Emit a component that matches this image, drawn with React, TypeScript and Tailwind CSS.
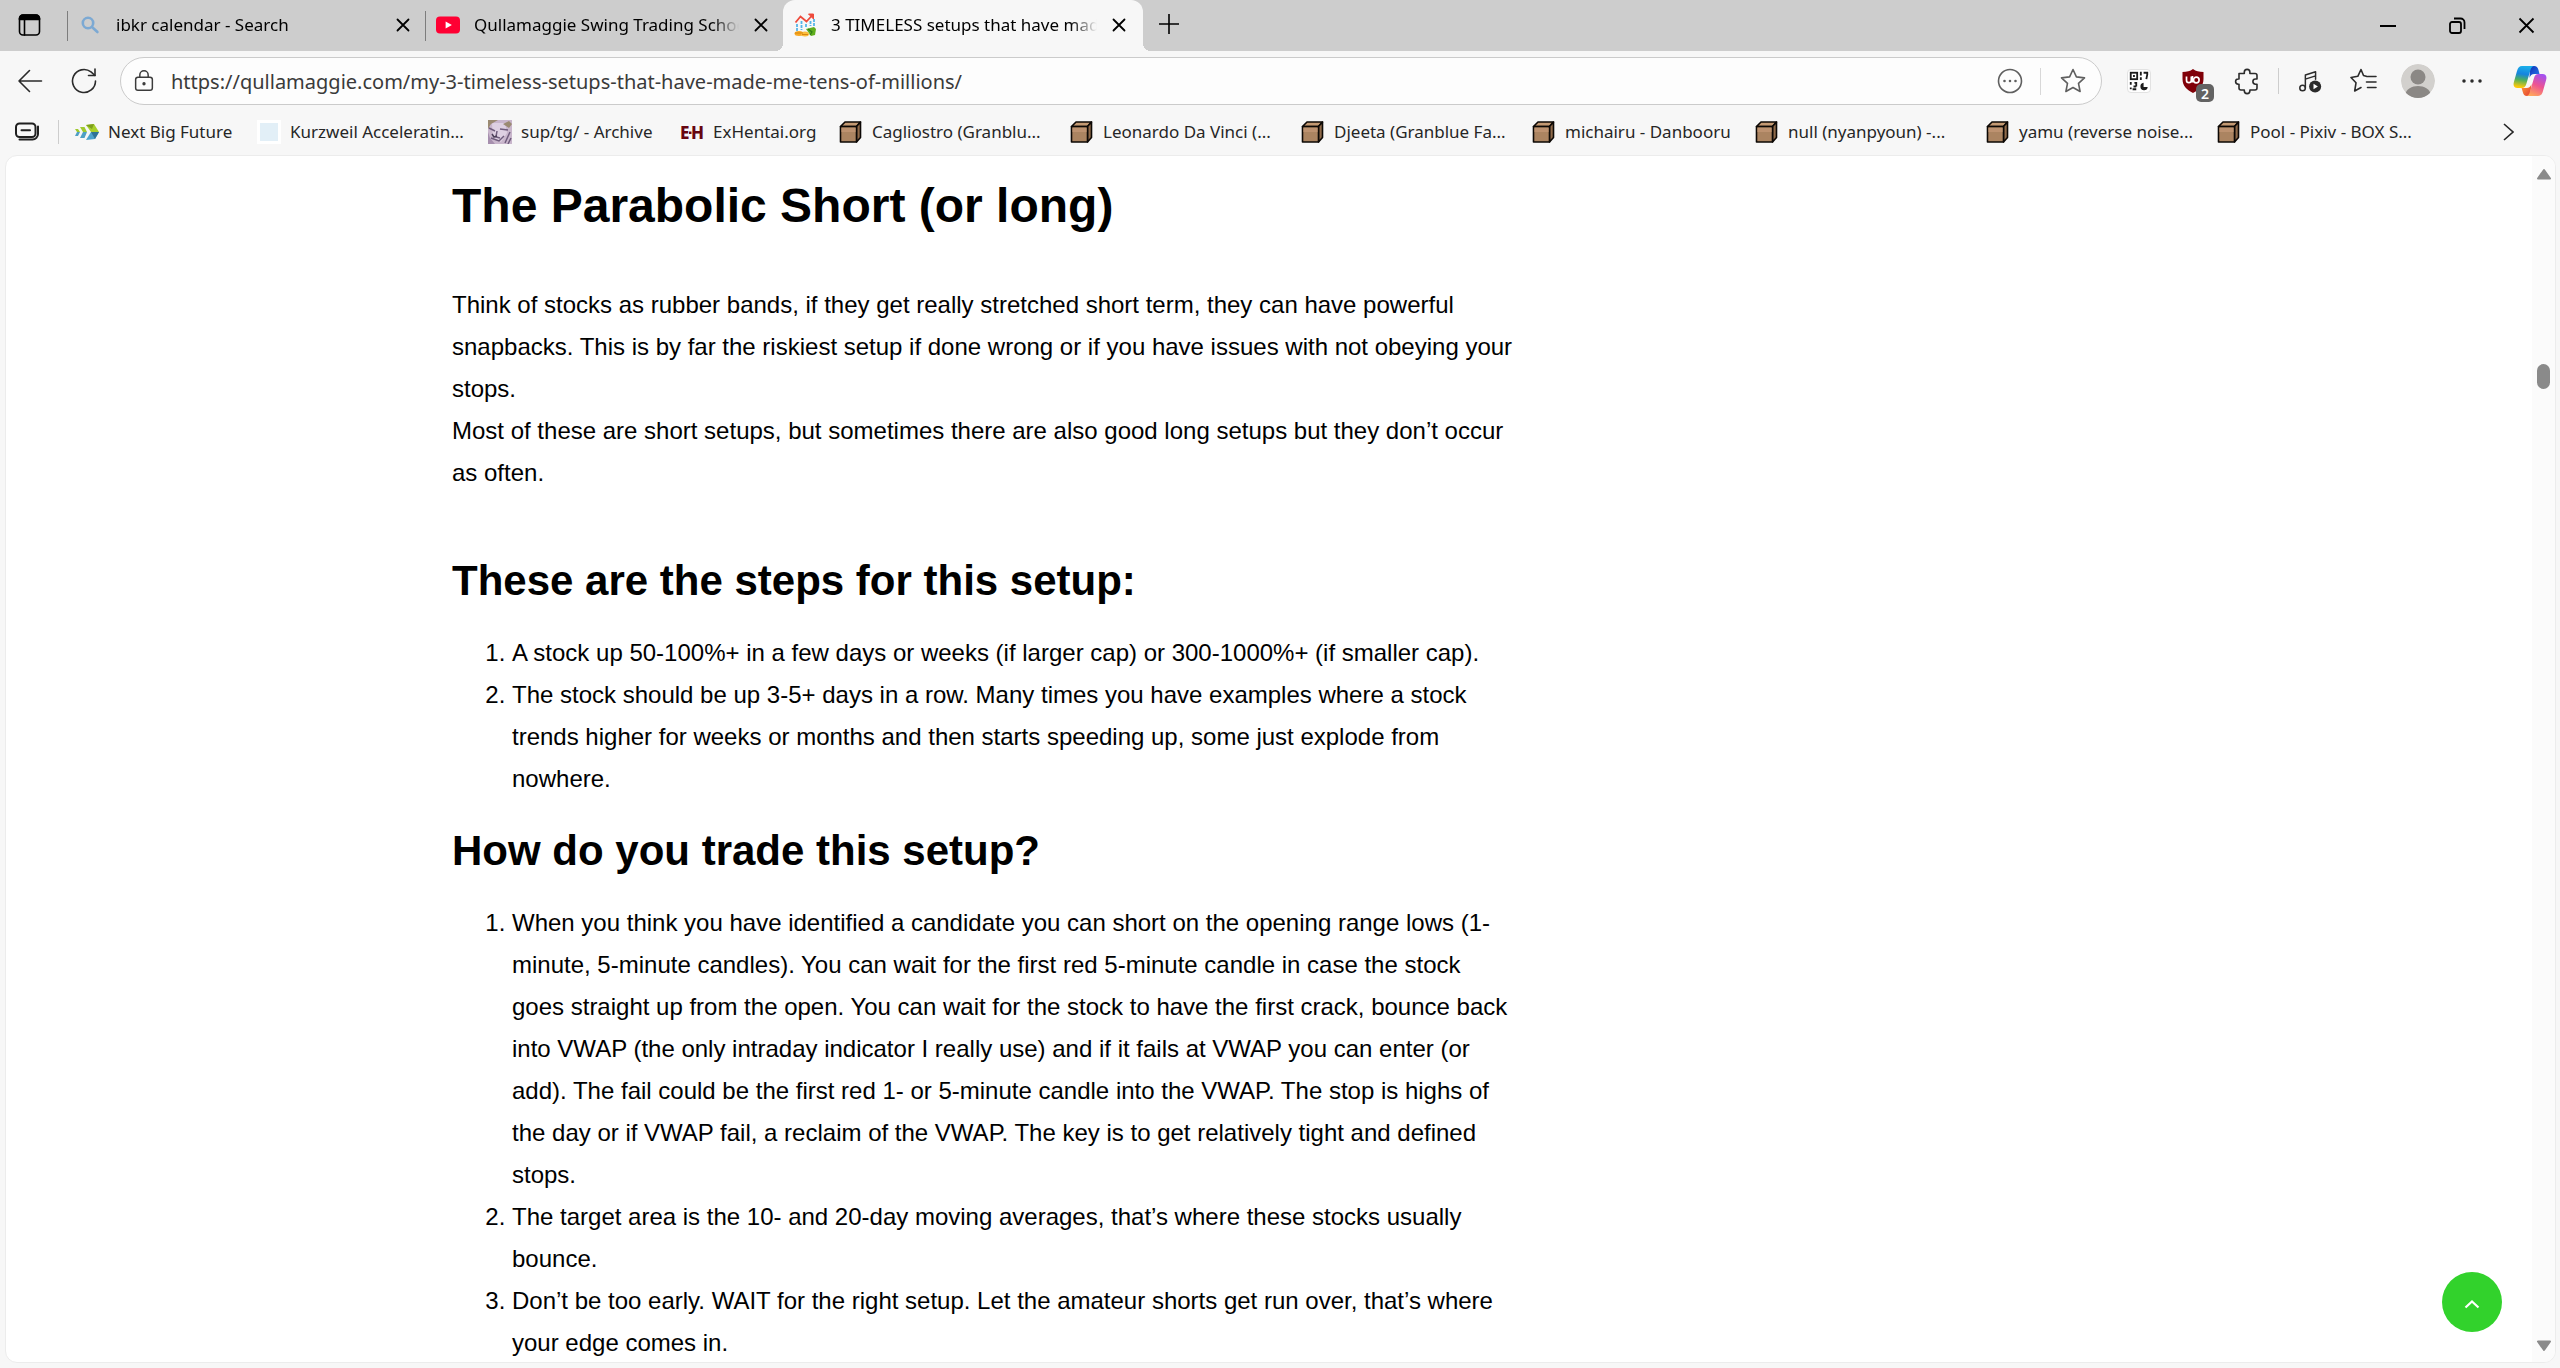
import React from "react";

type Children = { children: React.ReactNode };

function Icon({ size = 28, className = "", children }: Children & { size?: number; className?: string }) {
  return (
    <svg
      width={size}
      height={size}
      viewBox="0 0 28 28"
      fill="none"
      stroke="currentColor"
      strokeWidth="1.6"
      strokeLinecap="round"
      strokeLinejoin="round"
      aria-hidden="true"
      className={`shrink-0 ${className}`}
    >
      {children}
    </svg>
  );
}

function CloseGlyph() {
  return (
    <svg width="14" height="14" viewBox="0 0 14 14" stroke="currentColor" strokeWidth="1.8" strokeLinecap="round" aria-hidden="true">
      <path d="M1.5 1.5 12.5 12.5M12.5 1.5 1.5 12.5" />
    </svg>
  );
}

function SearchFavicon() {
  return (
    <svg width="24" height="24" viewBox="0 0 24 24" fill="none" stroke="#7ca9d3" strokeWidth="2.6" strokeLinecap="round" aria-hidden="true">
      <circle cx="10" cy="10" r="5.2" />
      <path d="m14 14 5.4 5" />
    </svg>
  );
}

function YoutubeFavicon() {
  return (
    <svg width="24" height="24" viewBox="0 0 24 24" aria-hidden="true">
      <rect x="0" y="3.5" width="24" height="17" rx="4" fill="#ff0033" />
      <path d="M9.6 8.4v7.2l6.3-3.6z" fill="#fff" />
    </svg>
  );
}

function ChartFavicon() {
  return (
    <svg width="24" height="24" viewBox="0 0 24 24" fill="none" aria-hidden="true">
      <path d="m2.5 9.5 5-6 6 5 6-6.5" stroke="#ee4b3c" strokeWidth="1.8" />
      <path d="M15.5 1h5v5z" fill="#ee4b3c" stroke="#ee4b3c" />
      <path d="M4 11v7M8.500 8v9M13 11v4M17.500 8v5M21 6v7" stroke="#55b4e8" strokeWidth="1.8" strokeDasharray="3 1" />
      <path d="m13 16 8-2 2 2-1 6-4 1z" fill="#5fae1c" />
      <path d="m15 16 4 3-2 3" stroke="#2f7d18" strokeWidth="1.2" />
      <ellipse cx="6" cy="20.500" rx="4.500" ry="2.500" fill="#f7a823" />
      <ellipse cx="12" cy="21" rx="4" ry="2.500" fill="#fbbd3b" />
      <path d="M2 20h8M9 21.500h6" stroke="#d98510" />
    </svg>
  );
}

function BoxFavicon() {
  return (
    <svg width="24" height="24" viewBox="0 0 24 24" stroke="#0c0805" strokeWidth="1.6" strokeLinejoin="round" aria-hidden="true">
      <path d="M1.500 6.500 6 2h15.500L17.500 6.500z" fill="#c49a73" />
      <path d="M17.500 6.500 21.500 2v15.500l-4 4.500z" fill="#8f6a4a" />
      <path d="M1.500 6.500h16V22h-16z" fill="#ab8461" />
      <path d="M2.500 8h14v4h-14z" fill="#bd9270" stroke="none" />
    </svg>
  );
}

function ArrowsFavicon() {
  return (
    <svg width="24" height="24" viewBox="0 0 24 24" aria-hidden="true">
      <path d="M0 9h3l2 3H2zM5 7h4.500l2.500 5H8z" fill="#9fc92e" />
      <path d="M2 12h3l-2 4H0zM8 12h4l-2.500 6H5z" fill="#4f9fc4" />
      <path d="m11 5 8-1 5 8h-8z" fill="#a8cf2c" />
      <path d="m11 5 8-1-2 5z" fill="#7d9f1c" />
      <path d="M16 12h8l-4 7-9 1z" fill="#4da3cc" />
      <path d="m16 12 8 0-4 7z" fill="#2f7397" />
    </svg>
  );
}

function PaleFavicon() {
  return (
    <svg width="24" height="24" viewBox="0 0 24 24" aria-hidden="true">
      <path d="M0 0h24v24H0z" fill="#fff" />
      <path d="M3 3h18v18H3z" fill="#e2eff7" />
    </svg>
  );
}

function PortraitFavicon() {
  return (
    <svg width="24" height="24" viewBox="0 0 24 24" fill="none" aria-hidden="true">
      <path d="M0 0h24v24H0z" fill="#c9b6cc" />
      <path d="M4 3h13l2 10-6 9-8-4z" fill="#ded0e2" />
      <path d="M0 0h10L3 4 0 9zM15 4l6-3 3 3-3 4z" fill="#9b8a72" />
      <path d="m1 8 6 3M12 9l8 1M9 11l-1 6 4 1M3 18l8 3 5-5M17 23l5-11M20 24l3-6" stroke="#6f5c7c" strokeWidth="1.500" />
      <path d="M0 12v12h7l-5-6z" fill="#a68fae" />
      <path d="m4 14 2 3 3-1" stroke="#4c3f58" strokeWidth="1.500" />
    </svg>
  );
}

function MonogramFavicon() {
  return (
    <svg width="24" height="24" viewBox="0 0 24 24" fill="#660611" aria-hidden="true">
      <text x="0" y="19" fontFamily="Noto Sans, sans-serif" fontWeight="800" fontSize="17">E</text>
      <rect x="9" y="11.500" width="2.500" height="2.500" />
      <text x="11" y="19" fontFamily="Noto Sans, sans-serif" fontWeight="800" fontSize="17">H</text>
    </svg>
  );
}

const bookmarks = [
  { label: "Next Big Future", icon: <ArrowsFavicon />, width: "w-[182px]" },
  { label: "Kurzweil Acceleratin...", icon: <PaleFavicon />, width: "w-[231px]" },
  { label: "sup/tg/ - Archive", icon: <PortraitFavicon />, width: "w-[192px]" },
  { label: "ExHentai.org", icon: <MonogramFavicon />, width: "w-[159px]" },
  { label: "Cagliostro (Granblu...", icon: <BoxFavicon />, width: "w-[231px]" },
  { label: "Leonardo Da Vinci (...", icon: <BoxFavicon />, width: "w-[231px]" },
  { label: "Djeeta (Granblue Fa...", icon: <BoxFavicon />, width: "w-[231px]" },
  { label: "michairu - Danbooru", icon: <BoxFavicon />, width: "w-[223px]" },
  { label: "null (nyanpyoun) -...", icon: <BoxFavicon />, width: "w-[231px]" },
  { label: "yamu (reverse noise...", icon: <BoxFavicon />, width: "w-[231px]" },
  { label: "Pool - Pixiv - BOX S...", icon: <BoxFavicon />, width: "w-[231px]" },
];

function Tab({ title, icon, active = false }: { title: string; icon: React.ReactNode; active?: boolean }) {
  const shape = active
    ? "relative z-10 w-[360px] pr-[2px] rounded-t-xl bg-[#f7f7f7] before:absolute before:bottom-0 before:-left-2 before:size-2 before:bg-[radial-gradient(circle_at_0_0,transparent_8px,#f7f7f7_8px)] after:absolute after:bottom-0 after:-right-2 after:size-2 after:bg-[radial-gradient(circle_at_100%_0,transparent_8px,#f7f7f7_8px)]"
    : "w-[358px]";
  return (
    <div className={`flex h-full items-center ${shape}`}>
      {!active && <span className="h-[30px] w-px shrink-0 bg-[#7d7d7d]" />}
      <button type="button" role="tab" aria-selected={active} className="flex h-full min-w-0 flex-1 items-center gap-[14px] pb-[2px] pl-[10px]">
        <span className="shrink-0">{icon}</span>
        <span className="min-w-0 flex-1 overflow-hidden text-left whitespace-nowrap [mask-image:linear-gradient(to_right,black_90%,transparent)]">
          {title}
        </span>
      </button>
      <button type="button" aria-label={`Close ${title}`} className="flex h-full w-[44px] shrink-0 items-center justify-center pb-[2px]">
        <CloseGlyph />
      </button>
    </div>
  );
}

function TitleBar() {
  return (
    <header className="flex h-[51px] shrink-0 items-center bg-[#cdcdcd] text-[17px] text-black">
      <button type="button" aria-label="Tab actions" className="flex h-full w-[67px] items-center pb-[2px] pl-[16px]">
        <Icon className="text-black">
          <rect x="3.500" y="4" width="20" height="20" rx="3.500" />
          <path d="M3.500 8.500V7.500A3.500 3.500 0 0 1 7 4h13a3.500 3.500 0 0 1 3.500 3.500v1z" fill="currentColor" />
          <path d="M8.500 9v15" />
        </Icon>
      </button>
      <div role="tablist" className="flex h-full">
        <Tab title="ibkr calendar - Search" icon={<SearchFavicon />} />
        <Tab title="Qullamaggie Swing Trading School" icon={<YoutubeFavicon />} />
        <Tab title="3 TIMELESS setups that have made" icon={<ChartFavicon />} active />
      </div>
      <button type="button" aria-label="New tab" className="ml-[11px] flex h-full w-[30px] items-center justify-center pb-[4px]">
        <svg width="22" height="22" viewBox="0 0 22 22" stroke="currentColor" strokeWidth="1.6" aria-hidden="true">
          <path d="M11 1v20M1 11h20" />
        </svg>
      </button>
      <div className="ml-auto flex h-full">
        <button type="button" aria-label="Minimize" className="flex w-[69px] items-center justify-center">
          <svg width="16" height="16" viewBox="0 0 16 16" stroke="currentColor" strokeWidth="2" aria-hidden="true"><path d="M0 8h16" /></svg>
        </button>
        <button type="button" aria-label="Restore" className="flex w-[70px] items-center justify-center">
          <svg width="17" height="17" viewBox="0 0 17 17" fill="none" stroke="currentColor" strokeWidth="1.800" aria-hidden="true">
            <rect x="1" y="5" width="11" height="11" rx="2" />
            <path d="M5 1.500h6.500a4 4 0 0 1 4 4V12" />
          </svg>
        </button>
        <button type="button" aria-label="Close window" className="flex w-[68px] items-center justify-center">
          <svg width="17" height="17" viewBox="0 0 17 17" stroke="currentColor" strokeWidth="1.800" aria-hidden="true"><path d="M1.500 1.500l14 14M15.500 1.500l-14 14" /></svg>
        </button>
      </div>
    </header>
  );
}

const toolButton = "flex h-12 w-[54px] shrink-0 items-center justify-center";

function Toolbar() {
  return (
    <div className="flex h-[60px] shrink-0 items-center pl-[3px] text-[#2b2b2b]">
      <button type="button" aria-label="Back" className={toolButton}>
        <Icon><path d="M25.500 14H3M13.500 3.500 3 14l10.500 10.500" /></Icon>
      </button>
      <button type="button" aria-label="Refresh" className={toolButton}>
        <Icon>
          <path d="M25.500 14A11.500 11.500 0 1 1 21 4.900L25 8.500" />
          <path d="M25 2v6.500h-6.500" />
        </Icon>
      </button>
      <div className="ml-[9px] flex h-12 min-w-0 flex-1 items-center rounded-full border border-[#cbcbcb] bg-[#fdfdfd] pl-[10px]">
        <button type="button" aria-label="View site information" className="text-[#3c3c3c]">
          <Icon size={26}>
            <rect x="5" y="10" width="18" height="14" rx="2.500" />
            <path d="M9.500 10V7.500a4.500 4.500 0 0 1 9 0V10" />
            <circle cx="14" cy="17" r="1" fill="currentColor" />
          </Icon>
        </button>
        <input
          type="text"
          aria-label="Address"
          defaultValue="https://qullamaggie.com/my-3-timeless-setups-that-have-made-me-tens-of-millions/"
          className="ml-[14px] h-full min-w-0 flex-1 bg-transparent text-[20px] text-[#3a3a3a] outline-none"
        />
        <button type="button" aria-label="Page actions" className="flex h-full w-[60px] items-center justify-center text-[#5f5f5f]">
          <Icon>
            <circle cx="14" cy="14" r="11.500" />
            <path d="M8.500 14h.01M14 14h.01M19.500 14h.01" strokeWidth="2.600" />
          </Icon>
        </button>
        <span className="h-[27px] w-px bg-[#d8d8d8]" />
        <button type="button" aria-label="Add to favorites" className="flex h-full w-[60px] items-center justify-center pl-1 text-[#5f5f5f]">
          <Icon>
            <path d="m14 2.500 3.400 7.400 8.100 1-6 5.500 1.600 8.100-7.100-4-7.100 4 1.600-8.100-6-5.500 8.100-1z" />
          </Icon>
        </button>
      </div>
      <div className="ml-[10px] flex items-center">
        <button type="button" aria-label="QR code extension" className={toolButton}>
          <svg width="24" height="24" viewBox="0 0 24 24" aria-hidden="true" className="rounded-sm border border-[#e2e2e2] bg-white">
            <g fill="none" stroke="#1c1c1c" strokeWidth="2">
              <rect x="3" y="3" width="7" height="7" />
              <path d="M14 2v4M14 8v3M17 3h4v2l-1 5M3 13v3M7 14h3M3 19v2M6 18h3M5 21h4M9 15v3" />
            </g>
            <path d="M5.500 5.500h2v2h-2z" fill="#1c1c1c" />
            <path d="M17 14a4 4 0 1 0 4.500 4.500H17z" fill="#1c1c1c" />
          </svg>
        </button>
        <button type="button" aria-label="Content blocker, 2 blocked" className={`relative ${toolButton}`}>
          <svg width="24" height="24" viewBox="0 0 24 24" aria-hidden="true">
            <path d="M12 0c3 2.200 6 3 10.500 3v7c0 7-4.500 11-10.500 14C6 21 1.500 17 1.500 10V3C6 3 9 2.200 12 0z" fill="#800008" />
            <path d="M5.500 7.500v3.800a2.400 2.400 0 0 0 4.800 0V7.500M11.500 7v6.500" fill="none" stroke="#fff" strokeWidth="1.700" />
            <circle cx="15.300" cy="11" r="2.800" fill="none" stroke="#fff" strokeWidth="1.700" />
          </svg>
          <span className="absolute top-[27px] left-[30px] flex h-[18px] w-[18px] items-center justify-center rounded-[5px] bg-[#636363] text-[14px] font-semibold text-white">2</span>
        </button>
        <button type="button" aria-label="Extensions" className={toolButton}>
          <Icon>
            <path d="M6 6.500h5.300V5.200a2.800 2.800 0 0 1 5.600 0v1.300H22a2 2 0 0 1 2 2V12h-1.500a2.600 2.600 0 0 0 0 5.200H24V21a2 2 0 0 1-2 2h-5.100v.8a2.800 2.800 0 0 1-5.600 0V23H8a2 2 0 0 1-2-2v-3.800H5.200a2.600 2.600 0 0 1 0-5.200H6z" />
          </Icon>
        </button>
        <span className="mx-1 h-[26px] w-px bg-[#cdcdcd]" />
        <button type="button" aria-label="Media controls" className={toolButton}>
          <Icon size={26}>
            <circle cx="6" cy="21.500" r="3" />
            <path d="M9 21.500V7.500L20 4v8M9 12l11-3.500" />
            <circle cx="19.500" cy="20" r="6.500" fill="currentColor" stroke="none" />
            <path d="M17.800 17v6l4.700-3z" fill="#fff" stroke="none" />
          </Icon>
        </button>
        <button type="button" aria-label="Favorites" className={toolButton}>
          <Icon>
            <path d="m17 9.500-3.500-1L11 2.500 7.800 9.300 1 10.500l5 5.300L4.700 24 11 20.500M18 9.500h8M16.500 15H26M17.500 20.500H26" />
          </Icon>
        </button>
        <button type="button" aria-label="Profile" className={toolButton}>
          <svg width="34" height="34" viewBox="0 0 34 34" aria-hidden="true" className="rounded-full">
            <circle cx="17" cy="17" r="17" fill="#d2d0cd" />
            <circle cx="17" cy="13" r="7.500" fill="#8b8885" />
            <path d="M4 31c2-12 24-12 26 0v3H4z" fill="#8b8885" />
          </svg>
        </button>
        <button type="button" aria-label="Settings and more" className={toolButton}>
          <Icon>
            <path d="M6 14h.01M14 14h.01M22 14h.01" strokeWidth="3.500" />
          </Icon>
        </button>
        <button type="button" aria-label="Copilot" className="flex h-12 w-[61px] shrink-0 items-center justify-center">
          <svg width="34" height="32" viewBox="0 0 34 32" aria-hidden="true">
            <defs>
              <linearGradient id="cpLeft" x1="0.4" y1="0" x2="0.25" y2="1">
                <stop offset="0" stopColor="#1aaee9" />
                <stop offset="0.35" stopColor="#1684df" />
                <stop offset="0.62" stopColor="#4fb05c" />
                <stop offset="0.95" stopColor="#fcc90a" />
              </linearGradient>
              <linearGradient id="cpRight" x1="0.7" y1="0" x2="0.3" y2="1">
                <stop offset="0" stopColor="#a350f0" />
                <stop offset="0.5" stopColor="#ee5391" />
                <stop offset="1" stopColor="#ffa65c" />
              </linearGradient>
              <linearGradient id="cpTop" x1="0" y1="0" x2="1" y2="1">
                <stop offset="0" stopColor="#0c2fb5" />
                <stop offset="1" stopColor="#2a7df0" />
              </linearGradient>
              <linearGradient id="cpBottom" x1="0" y1="0" x2="1" y2="1">
                <stop offset="0" stopColor="#ff9b3a" />
                <stop offset="1" stopColor="#e23b32" />
              </linearGradient>
            </defs>
            <path d="M17 1h4c2.600 0 3.800 1.500 4.500 4l1 4h-5c-3 0-4 1.500-5 4z" fill="url(#cpTop)" />
            <path d="M17 31h-3c-2.600 0-3.500-1.500-4.200-4l-1.200-4h5c2.500 0 3.900-1.500 4.900-4z" fill="url(#cpBottom)" />
            <path d="M9 1h12c-2 .5-3 2-3.700 4.500l-4 13.500c-.8 2.700-2 4-4.500 4H4.500c-3.500 0-4.600-2.500-3.600-6L4 6c1-3.400 2.300-5 5-5z" fill="url(#cpLeft)" />
            <path d="M25 31H13.500c2-.5 2.800-2 3.500-4.500l4-13.500c.8-2.700 2-4 4.500-4h4c3.500 0 4.600 2.500 3.600 6L30 26c-1 3.400-2.300 5-5 5z" fill="url(#cpRight)" />
          </svg>
        </button>
      </div>
    </div>
  );
}

function BookmarksBar() {
  return (
    <nav aria-label="Favorites bar" className="flex h-[44px] shrink-0 items-center pb-[2px] text-[17px] text-[#262626]">
      <button type="button" aria-label="Saved tab groups" className="flex w-[58px] items-center pl-[13px]">
        <Icon className="text-[#1f1f1f]">
          <rect x="3" y="5.500" width="19.500" height="13.500" rx="3.500" strokeWidth="2" />
          <path d="M8.500 12.200h8.500" strokeWidth="2" />
          <path d="M25 8.500v7.500a5.500 5.500 0 0 1-5.500 5.500H6.500" strokeWidth="2" />
        </Icon>
      </button>
      <span className="h-6 w-px shrink-0 bg-[#cdcdcd]" />
      <ul className="ml-4 flex min-w-0 flex-1 overflow-hidden">
        {bookmarks.map((b) => (
          <li key={b.label} className={`shrink-0 ${b.width}`}>
            <a href="#" className="flex items-center gap-[9px] whitespace-nowrap">
              {b.icon}
              {b.label}
            </a>
          </li>
        ))}
      </ul>
      <button type="button" aria-label="More favorites" className="mr-[43px] flex size-[18px] items-center justify-center">
        <svg width="11" height="18" viewBox="0 0 11 18" fill="none" stroke="currentColor" strokeWidth="1.600" aria-hidden="true">
          <path d="m1 1 9 8-9 8" />
        </svg>
      </button>
    </nav>
  );
}

function SectionHeading({ children }: Children) {
  return <h2 className="mt-[23px] mb-[23px] text-[42px] leading-[56px] font-bold">{children}</h2>;
}

function Steps({ children }: Children) {
  return <ol className="list-decimal pl-[60px]">{children}</ol>;
}

function Article() {
  return (
    <div className="mx-auto w-full max-w-[1634px] pt-[18px]">
      <article className="w-2/3 pr-[24px] font-['Liberation_Sans',Arial,sans-serif] text-[24px] leading-[42px] text-black">
        <h1 className="mb-[46px] text-[48px] leading-[64px] font-bold">The Parabolic Short (or long)</h1>
        <p className="mb-[59px]">
          Think of stocks as rubber bands, if they get really stretched short term, they can have powerful snapbacks. This is by
          far the riskiest setup if done wrong or if you have issues with not obeying your stops.
          <br />
          Most of these are short setups, but sometimes there are also good long setups but they don’t occur as often.
        </p>
        <SectionHeading>These are the steps for this setup:</SectionHeading>
        <Steps>
          <li>A stock up 50-100%+ in a few days or weeks (if larger cap) or 300-1000%+ (if smaller cap).</li>
          <li>
            The stock should be up 3-5+ days in a row. Many times you have examples where a stock trends higher for weeks or
            months and then starts speeding up, some just explode from nowhere.
          </li>
        </Steps>
        <SectionHeading>How do you trade this setup?</SectionHeading>
        <Steps>
          <li>
            When you think you have identified a candidate you can short on the opening range lows (1-minute, 5-minute candles).
            You can wait for the first red 5-minute candle in case the stock goes straight up from the open. You can wait for the
            stock to have the first crack, bounce back into VWAP (the only intraday indicator I really use) and if it fails at
            VWAP you can enter (or add). The fail could be the first red 1- or 5-minute candle into the VWAP. The stop is highs
            of the day or if VWAP fail, a reclaim of the VWAP. The key is to get relatively tight and defined stops.
          </li>
          <li>The target area is the 10- and 20-day moving averages, that’s where these stocks usually bounce.</li>
          <li>
            Don’t be too early. WAIT for the right setup. Let the amateur shorts get run over, that’s where your edge comes in.
          </li>
        </Steps>
      </article>
    </div>
  );
}

function ScrollTrack() {
  return (
    <div className="flex w-[23px] shrink-0 flex-col items-center bg-[#fbfbfb] pt-3 pb-[10px]">
      <svg width="16" height="12" viewBox="0 0 16 12" fill="#8a8a8a" stroke="#8a8a8a" strokeWidth="2" strokeLinejoin="round" aria-hidden="true">
        <path d="M8 2l6 8.500H2z" />
      </svg>
      <span className="mt-[184px] h-[25px] w-[13px] rounded-full bg-[#8a8a8a]" />
      <svg width="16" height="12" viewBox="0 0 16 12" fill="#8a8a8a" stroke="#8a8a8a" strokeWidth="2" strokeLinejoin="round" aria-hidden="true" className="mt-auto">
        <path d="M8 10 2 1.500h12z" />
      </svg>
    </div>
  );
}

export default function App() {
  return (
    <div className="flex h-screen flex-col overflow-hidden bg-[#f7f7f7] font-['Noto_Sans','Segoe_UI',sans-serif]">
      <TitleBar />
      <Toolbar />
      <BookmarksBar />
      <main className="relative mr-1 mb-[5px] ml-[5px] flex min-h-0 flex-1 overflow-hidden rounded-xl border border-[#ececec] bg-white">
        <div className="min-w-0 flex-1 overflow-hidden">
          <Article />
        </div>
        <ScrollTrack />
        <button
          type="button"
          aria-label="Back to top"
          className="absolute right-[53px] bottom-[30px] flex size-[60px] items-center justify-center rounded-full bg-[#32d22c] text-white"
        >
          <svg width="16" height="10" viewBox="0 0 16 10" fill="none" stroke="currentColor" strokeWidth="2.200" aria-hidden="true" className="mt-1">
            <path d="m1.500 8.500 6.500-6 6.500 6" />
          </svg>
        </button>
      </main>
    </div>
  );
}
